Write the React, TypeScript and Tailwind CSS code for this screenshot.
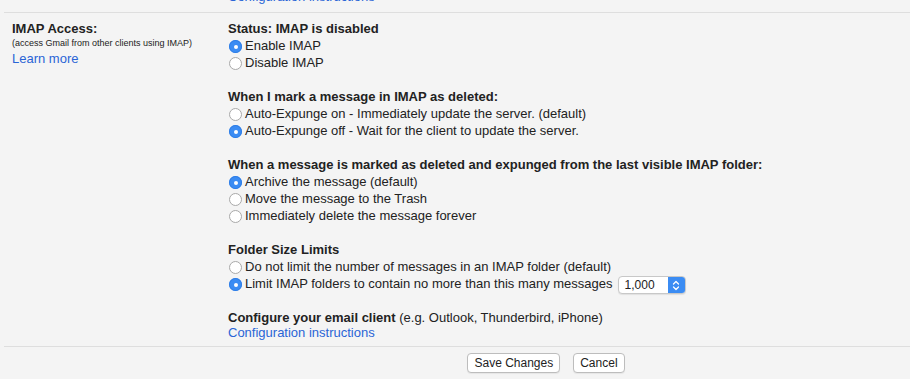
import React from 'react'

function Radio({ checked }: { checked?: boolean }) {
  return checked ? (
    <span className="mr-[3px] mt-[3px] flex h-[13px] w-[13px] shrink-0 items-center justify-center rounded-full bg-[#3b8cf3] shadow-[inset_0_0_0_1px_#2f7ee6]">
      <span className="h-[4px] w-[4px] rounded-full bg-white" />
    </span>
  ) : (
    <span className="mr-[3px] mt-[3px] h-[13px] w-[13px] shrink-0 rounded-full border border-[#a9a9a9] bg-white" />
  )
}

function Option({ checked, children }: { checked?: boolean; children: React.ReactNode }) {
  return (
    <div className="flex h-[17px] items-start pl-[1px]">
      <Radio checked={checked} />
      <span>{children}</span>
    </div>
  )
}

function Heading({ children }: { children: React.ReactNode }) {
  return <div className="h-[17px] font-bold">{children}</div>
}

function NumberSelect() {
  return (
    <div className="ml-[5px] mt-[1px] flex h-[18px] w-[68px] overflow-hidden rounded-[4px] border border-[#c8c8c8] bg-white text-[12px] leading-[16px] shadow-[0_1px_1px_rgba(0,0,0,0.08)]">
      <span className="flex-1 pl-[6px]">1,000</span>
      <span className="flex w-[17px] items-center justify-center bg-[#3b8cf3]">
        <svg width="8" height="11" viewBox="0 0 8 11" fill="none" stroke="white" strokeWidth="1.3" strokeLinecap="round" strokeLinejoin="round">
          <path d="M1.5 4 L4 1.5 L6.5 4" />
          <path d="M1.5 7 L4 9.5 L6.5 7" />
        </svg>
      </span>
    </div>
  )
}

function Button({ children }: { children: React.ReactNode }) {
  return (
    <button className="h-[20px] rounded-[4px] border border-[#bdbdbd] bg-white px-[6px] text-[12px] leading-[17px] text-[#222] shadow-[0_1px_1px_rgba(0,0,0,0.06)]">
      {children}
    </button>
  )
}

export default function App() {
  return (
    <div className="h-[391px] w-[910px] bg-white font-['Liberation_Sans',Arial,sans-serif] text-[13px] leading-[17px] text-[#222]">
      <div className="bg-[#f4f4f4] pb-[6px]">
        <div className="h-[12px] overflow-hidden pl-[228px]">
          <div className="-mt-[12px] text-[#2a64d6]">Configuration instructions</div>
        </div>
        <div className="ml-[4px] border-t border-[#dedede]" />
        <div className="flex pt-[7px]">
          <div className="w-[228px] shrink-0 pl-[12px]">
            <div className="font-bold">IMAP Access:</div>
            <div className="text-[9px] leading-[13px]">(access Gmail from other clients using IMAP)</div>
            <div className="text-[#2a64d6]">Learn more</div>
          </div>
          <div className="flex-1">
            <Heading>Status: IMAP is disabled</Heading>
            <Option checked>Enable IMAP</Option>
            <Option>Disable IMAP</Option>
            <div className="h-[17px]" />
            <Heading>When I mark a message in IMAP as deleted:</Heading>
            <Option>Auto-Expunge on - Immediately update the server. (default)</Option>
            <Option checked>Auto-Expunge off - Wait for the client to update the server.</Option>
            <div className="h-[17px]" />
            <Heading>When a message is marked as deleted and expunged from the last visible IMAP folder:</Heading>
            <Option checked>Archive the message (default)</Option>
            <Option>Move the message to the Trash</Option>
            <Option>Immediately delete the message forever</Option>
            <div className="h-[17px]" />
            <Heading>Folder Size Limits</Heading>
            <Option>Do not limit the number of messages in an IMAP folder (default)</Option>
            <div className="flex h-[19px] items-start pl-[1px]">
              <Radio checked />
              <span>Limit IMAP folders to contain no more than this many messages</span>
              <NumberSelect />
            </div>
            <div className="h-[15px]" />
            <div>
              <span className="font-bold">Configure your email client</span> (e.g. Outlook, Thunderbird, iPhone)
            </div>
            <div className="-mt-[2px] text-[#2a64d6]">Configuration instructions</div>
          </div>
        </div>
        <div className="ml-[4px] mt-[5px] border-t border-[#dedede]" />
        <div className="flex justify-center gap-[13px] pl-[182px] pt-[6px]">
          <Button>Save Changes</Button>
          <Button>Cancel</Button>
        </div>
      </div>
    </div>
  )
}
